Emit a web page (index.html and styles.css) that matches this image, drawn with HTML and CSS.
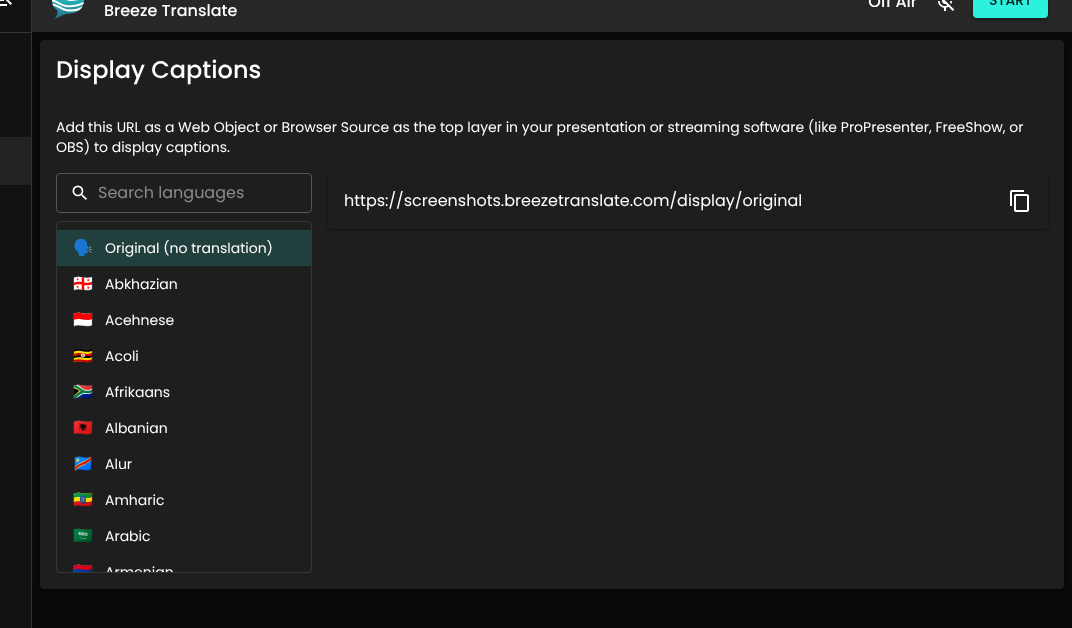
FILE: index.html
```html
<!DOCTYPE html>
<html lang="en">
<head>
    <meta charset="UTF-8">
    <meta name="viewport" content="width=device-width, initial-scale=1.0">
    <title>Breeze Translate</title>
    <link rel="stylesheet" href="styles.css">
</head>
<body>

<div class="app">
    <aside class="sidebar">
        <div class="sidebar-top">
            <svg class="menu-icon" viewBox="0 0 24 24"><path d="M3 18h13v-2H3v2zM3 13h10v-2H3v2zm0-7v2h13V6H3zm18 9.590L17.420 12 21 8.410 19.590 7l-5 5 5 5L21 15.590z"/></svg>
        </div>
        <div class="sidebar-item active"></div>
    </aside>

    <div class="main">
        <header class="topbar">
            <svg class="logo" viewBox="0 0 32 40">
                <defs>
                    <linearGradient id="breeze" x1="0" y1="0" x2="0" y2="1">
                        <stop offset="0.500" stop-color="#23b0b8"/>
                        <stop offset="1" stop-color="#2a6a80"/>
                    </linearGradient>
                    <clipPath id="bubble">
                        <path d="M16 4a16 16 0 0 1 16 16c0 8-6 13.500-14 13.500-5 .3-9 2-15.500 6 2-3 3.500-6 3-9C2 28 0 25 0 20A16 16 0 0 1 16 4z"/>
                    </clipPath>
                </defs>
                <g clip-path="url(#bubble)">
                    <rect width="32" height="40" fill="url(#breeze)"/>
                    <path class="wave" d="M4 15.500c6 0 8 4 14 4.500 5 .4 9-1 14-3"/>
                    <path class="wave" d="M0 20.500c5 .5 8 4.500 14 5.500s12-.5 18-3"/>
                    <path class="wave" d="M0 24.500c5 0 8 4 14 5.500 6 1.300 11 .5 18-3.500"/>
                </g>
            </svg>
            <h1 class="brand">Breeze Translate</h1>
            <span class="air">Off Air</span>
            <svg class="mic-icon" viewBox="0 0 24 24"><path d="M10.800 4.900c0-.66.540-1.200 1.200-1.200s1.200.540 1.200 1.200l-.010 3.910L15 10.600V5c0-1.660-1.340-3-3-3-1.540 0-2.790 1.160-2.960 2.650l1.760 1.760V4.900zM19 11h-1.700c0 .58-.1 1.130-.270 1.640l1.270 1.270c.440-.88.700-1.870.700-2.910zM4.410 2.860 3 4.270l6 6V11c0 1.660 1.340 3 3 3 .23 0 .440-.030.650-.080l1.660 1.660c-.710.330-1.500.520-2.310.520-2.760 0-5.300-2.100-5.300-5.100H5c0 3.410 2.720 6.230 6 6.720V21h2v-3.280c.910-.130 1.770-.450 2.550-.9l4.200 4.180 1.410-1.410L4.410 2.860z"/></svg>
            <button class="start">START</button>
        </header>

        <section class="card">
            <h2>Display Captions</h2>
            <p class="intro">Add this URL as a Web Object or Browser Source as the top layer in your presentation or streaming software (like ProPresenter, FreeShow, or<br>OBS) to display captions.</p>
            <div class="columns">
                <div class="languages">
                    <div class="search">
                        <svg viewBox="0 0 24 24"><path d="M15.500 14h-.790l-.280-.270A6.471 6.471 0 0 0 16 9.500 6.500 6.500 0 1 0 9.500 16c1.610 0 3.090-.590 4.230-1.570l.270.280v.790l5 4.990L20.490 19l-4.990-5zm-6 0C7.010 14 5 11.990 5 9.500S7.010 5 9.500 5 14 7.010 14 9.500 11.990 14 9.500 14z"/></svg>
                        <span>Search languages</span>
                    </div>
                    <ul class="list">
                        <li class="selected"><span class="flag">🗣️</span>Original (no translation)</li>
                        <li><span class="flag">🇬🇪</span>Abkhazian</li>
                        <li><span class="flag">🇮🇩</span>Acehnese</li>
                        <li><span class="flag">🇺🇬</span>Acoli</li>
                        <li><span class="flag">🇿🇦</span>Afrikaans</li>
                        <li><span class="flag">🇦🇱</span>Albanian</li>
                        <li><span class="flag">🇨🇩</span>Alur</li>
                        <li><span class="flag">🇪🇹</span>Amharic</li>
                        <li><span class="flag">🇸🇦</span>Arabic</li>
                        <li><span class="flag">🇦🇲</span>Armenian</li>
                    </ul>
                </div>
                <div class="url-box">
                    <span class="url">https://screenshots.breezetranslate.com/display/original</span>
                    <svg viewBox="0 0 24 24"><path d="M16 1H4c-1.100 0-2 .9-2 2v14h2V3h12V1zm3 4H8c-1.100 0-2 .9-2 2v14c0 1.100.9 2 2 2h11c1.100 0 2-.9 2-2V7c0-1.100-.9-2-2-2zm0 16H8V7h11v14z"/></svg>
                </div>
            </div>
        </section>
    </div>
</div>

</body>
</html>
```

FILE: styles.css
```css
* {
    box-sizing: border-box;
}

body {
    margin: 0;
    height: 628px;
    overflow: hidden;
    background: #090909;
    color: #fff;
    font-family: Poppins, Inter, sans-serif;
    text-rendering: geometricPrecision;
}

/* top bar is scrolled halfway out of view */
.app {
    display: flex;
    height: 660px;
    margin-top: -32px;
    will-change: transform;
}

.sidebar {
    width: 32px;
    flex-shrink: 0;
    background: #121212;
    border-right: 1px solid #343434;
}

.sidebar-top {
    display: flex;
    align-items: center;
    justify-content: flex-end;
    height: 65px;
    padding-right: 16px;
    border-bottom: 1px solid #343434;
}

.menu-icon {
    width: 24px;
    height: 24px;
    flex-shrink: 0;
    fill: #fff;
}

.sidebar-item {
    height: 48px;
    margin-top: 104px;
}

.sidebar-item.active {
    background: #222;
}

.main {
    flex: 1;
    min-width: 0;
}

.topbar {
    display: flex;
    align-items: center;
    height: 64px;
    padding: 0 24px 0 20px;
    background: #272727;
}

.logo {
    width: 32px;
    height: 40px;
}

.wave {
    fill: none;
    stroke: #fff;
    stroke-width: 2;
}

.brand {
    margin: 22px 0 0 20px;
    font-size: 16px;
    font-weight: 500;
    line-height: 24px;
}

.air {
    margin: 4px 0 0 auto;
    font-size: 16px;
    font-weight: 500;
    line-height: 24px;
}

.mic-icon {
    width: 24px;
    height: 24px;
    margin: 4px 16px 0 16px;
    fill: #fff;
}

.start {
    width: 75px;
    height: 36px;
    padding: 0;
    border: none;
    border-radius: 4px;
    background: #2cf1dd;
    color: rgba(0, 0, 0, 0.87);
    font: 500 14px/24px Poppins, Inter, sans-serif;
    box-shadow: 0 2px 3px rgba(0, 0, 0, 0.3);
}

.card {
    height: 549px;
    margin: 8px 8px 0;
    padding: 12px 16px 16px;
    border-radius: 4px;
    background: #1e1e1e;
    box-shadow: 0 1px 4px rgba(0, 0, 0, 0.6);
}

h2 {
    margin: 0;
    font-size: 24px;
    font-weight: 500;
    line-height: 38px;
}

.intro {
    margin: 27px 0 16px;
    font-size: 14px;
    line-height: 20px;
    white-space: nowrap;
}

.columns {
    display: flex;
    align-items: flex-start;
    gap: 16px;
}

.languages {
    width: 256px;
}

.search {
    display: flex;
    align-items: center;
    gap: 8px;
    height: 40px;
    padding: 0 14px;
    border: 1px solid #565656;
    border-radius: 4px;
    color: #8b8b8b;
    font-size: 16px;
}

.search svg {
    width: 20px;
    height: 20px;
    margin-left: -1px;
    fill: #fff;
}

.search span {
    padding-bottom: 2px;
}

.list {
    height: 352px;
    margin: 8px 0 0;
    padding: 8px 0;
    overflow: hidden;
    border: 1px solid #373737;
    border-radius: 4px;
    list-style: none;
}

.list li {
    display: flex;
    align-items: center;
    height: 36px;
    padding: 0 16px;
    font-size: 14px;
}

.list li.selected {
    background: #213f3c;
}

.flag {
    width: 32px;
    padding-bottom: 1px;
    font-family: "Noto Color Emoji", sans-serif;
    font-size: 16px;
}

.url-box {
    display: flex;
    flex: 1;
    align-items: center;
    justify-content: space-between;
    height: 56px;
    padding: 0 16px;
    border-radius: 4px;
    font-size: 16px;
    box-shadow: 0 1px 3px rgba(0, 0, 0, 0.4);
}

.url {
    padding-bottom: 2px;
}

.url-box svg {
    width: 24px;
    height: 24px;
    fill: #fff;
}
```
